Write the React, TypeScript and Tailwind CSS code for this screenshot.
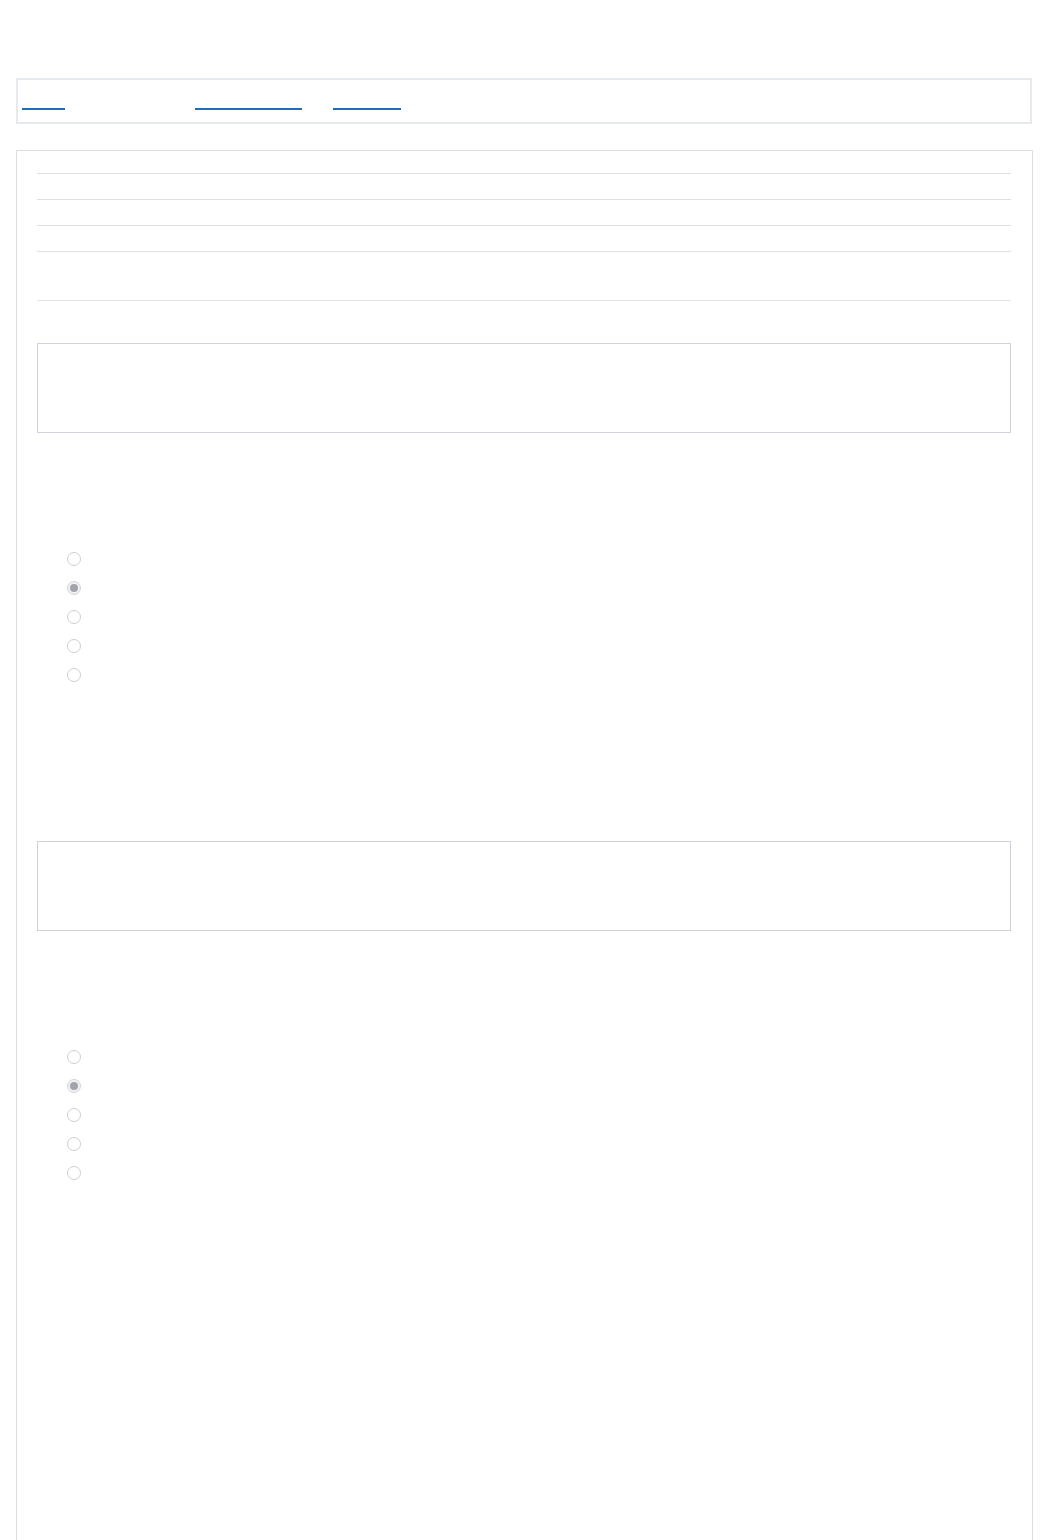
import React from "react";

const tableRows = [
  "h-[23px]",
  "h-[26px]",
  "h-[26px]",
  "h-[26px]",
  "h-[49px]",
];

function Radio({ checked }: { checked?: boolean }) {
  return (
    <span
      className={
        checked
          ? "flex h-[14px] w-[14px] items-center justify-center rounded-full border border-[#d4d5da] bg-[#f1f1f3]"
          : "block h-[14px] w-[14px] rounded-full border border-[#cfcfd3] bg-white"
      }
    >
      {checked ? <span className="block h-[8px] w-[8px] rounded-full bg-[#a2a4ac]" /> : null}
    </span>
  );
}

function Question() {
  return (
    <div>
      <div className="h-[90px] border border-[#cfd2db] bg-white" />
      <div className="mt-[111px] flex flex-col">
        {[0, 1, 2, 3, 4].map((i) => (
          <label key={i} className="flex h-[29px] items-center pl-[30px]">
            <Radio checked={i === 1} />
          </label>
        ))}
      </div>
    </div>
  );
}

export default function App() {
  return (
    <div className="min-h-[1540px] bg-white px-4 pt-[78px]" style={{ fontFamily: '"Liberation Sans", Arial, sans-serif' }}>
      <nav className="flex h-[46px] items-start border-2 border-[#e6e9ed] pl-[4px]">
        <a className="mt-[28px] block h-[2px] w-[43px] bg-[#1c6cc0]" href="#" aria-label="link" />
        <a className="ml-[130px] mt-[28px] block h-[2px] w-[107px] bg-[#1c6cc0]" href="#" aria-label="link" />
        <a className="ml-[31px] mt-[28px] block h-[2px] w-[68px] bg-[#1c6cc0]" href="#" aria-label="link" />
      </nav>

      <main className="-mr-px mt-[26px] min-h-[1390px] border border-b-0 border-[#dedede] pl-5 pr-[21px]">
        <div className="flex flex-col">
          {tableRows.map((h, i) => (
            <div
              key={i}
              className={`${h} border-b ${i === tableRows.length - 1 ? "border-[#dfe2e7]" : "border-[#e0e0e0]"}`}
            />
          ))}
        </div>

        <div className="mt-[42px]">
          <Question />
        </div>
        <div className="mt-[152px]">
          <Question />
        </div>
      </main>
    </div>
  );
}
